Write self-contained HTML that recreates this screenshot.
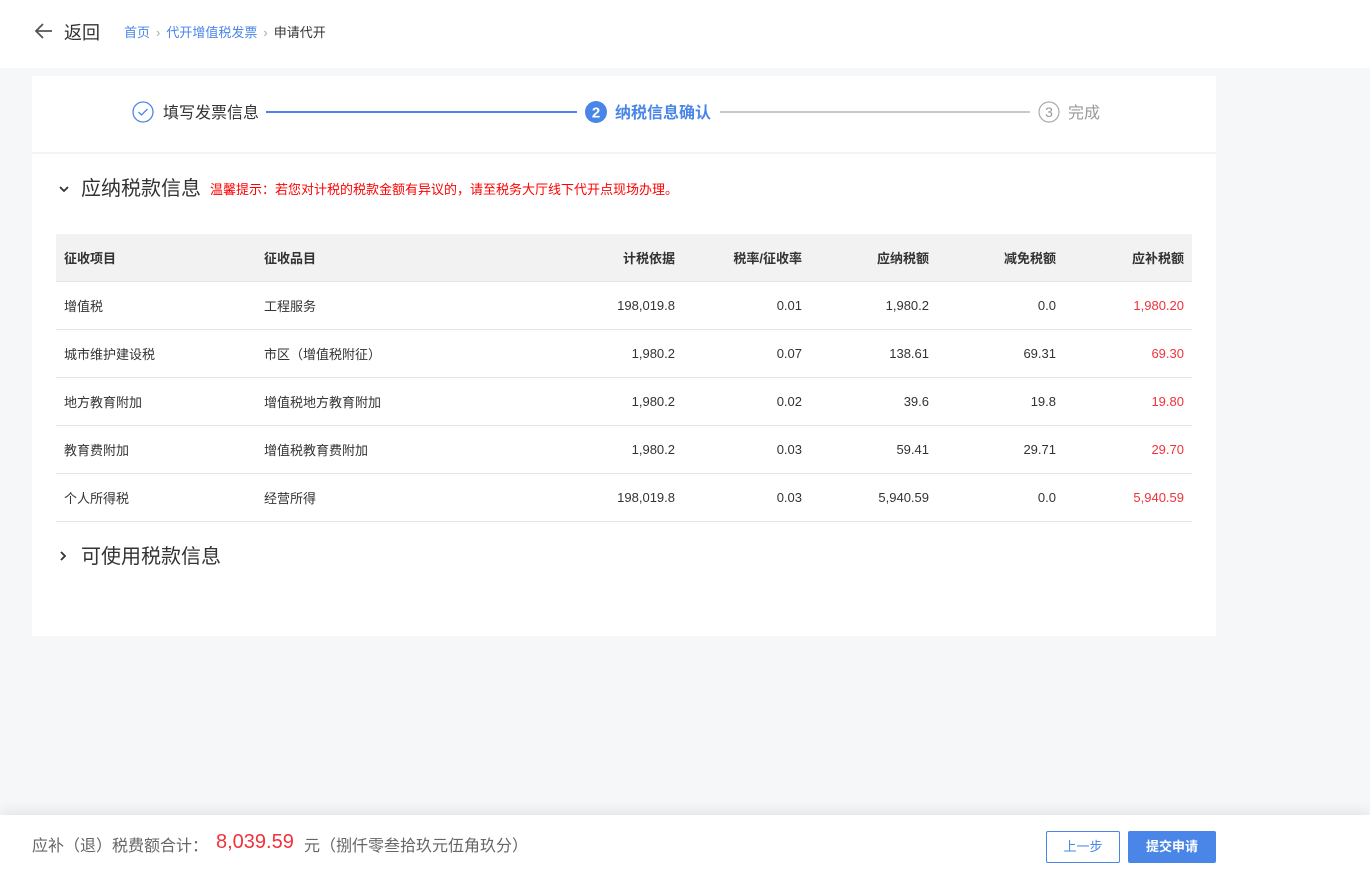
<!DOCTYPE html><html><head><meta charset="utf-8"><style>
*{margin:0;padding:0;box-sizing:border-box}
body{width:1370px;height:869px;background:#f6f7f9;font-family:"Liberation Sans","Noto Sans CJK SC",sans-serif;position:relative;overflow:hidden;color:#333}
.top{position:absolute;left:0;top:0;width:1370px;height:68px;background:#fff}
.a{position:absolute;white-space:nowrap}
.card{position:absolute;left:32px;top:76px;width:1184px;height:560px;background:#fff}
.sep{position:absolute;left:32px;top:152px;width:1184px;height:2px;background:#f3f4f6}
table{position:absolute;left:56px;top:234px;width:1136px;border-collapse:collapse;font-size:13px;color:#333}
th{height:47px;background:#f2f2f2;font-weight:bold;text-align:left;padding:0 8px;border-bottom:1px solid #e4e4e4}
td{height:48px;padding:0 8px;border-bottom:1px solid #e4e4e4}
.r{text-align:right}.red{color:#f0323c}
.foot{position:absolute;left:0;top:815px;width:1370px;height:54px;background:#fff;box-shadow:0 -6px 10px rgba(0,0,0,.06)}
.bs{color:#aaa;margin:0 6px}
</style></head><body>
<div class="top"></div>
<svg class="a" style="left:34px;top:22px" width="20" height="18" viewBox="0 0 20 18"><path d="M18 9H2M9 2L2 9l7 7" fill="none" stroke="#555" stroke-width="1.8"/></svg>
<div class="a" style="left:64px;top:19px;font-size:18px;color:#333">返回</div>
<div class="a" style="left:124px;top:22px;font-size:13px;color:#4a86e8">首页<span class="bs">›</span>代开增值税发票<span class="bs">›</span><span style="color:#333">申请代开</span></div>
<div class="card"></div><div class="sep"></div>
<svg class="a" style="left:132px;top:101px" width="22" height="22"><circle cx="11" cy="11" r="10" fill="none" stroke="#4a86e8" stroke-width="1.3"/><path d="M6.5 11l3 3 6-6" fill="none" stroke="#4a86e8" stroke-width="1.3"/></svg>
<div class="a" style="left:163px;top:99px;font-size:16px;color:#333">填写发票信息</div>
<div class="a" style="left:266px;top:111px;width:311px;height:2px;background:#4a86e8"></div>
<svg class="a" style="left:585px;top:101px" width="22" height="22"><circle cx="11" cy="11" r="11" fill="#4a86e8"/><text x="11" y="16.5" text-anchor="middle" font-size="15" font-weight="bold" fill="#fff" font-family="Liberation Sans">2</text></svg>
<div class="a" style="left:615px;top:99px;font-size:16px;font-weight:bold;color:#4a86e8">纳税信息确认</div>
<div class="a" style="left:720px;top:111px;width:310px;height:2px;background:#c8c8c8"></div>
<svg class="a" style="left:1038px;top:101px" width="22" height="22"><circle cx="11" cy="11" r="10" fill="none" stroke="#aaa" stroke-width="1.2"/><text x="11" y="16" text-anchor="middle" font-size="14" fill="#999" font-family="Liberation Sans">3</text></svg>
<div class="a" style="left:1068px;top:99px;font-size:16px;color:#999">完成</div>
<svg class="a" style="left:58px;top:184px" width="12" height="10"><path d="M2 3l4 4 4-4" fill="none" stroke="#333" stroke-width="1.8"/></svg>
<div class="a" style="left:81px;top:172px;font-size:20px;color:#333">应纳税款信息</div>
<div class="a" style="left:210px;top:179px;font-size:13px;color:#f00">温馨提示：若您对计税的税款金额有异议的，请至税务大厅线下代开点现场办理。</div>
<table>
<tr><th style="width:200px">征收项目</th><th style="width:240px">征收品目</th><th class="r" style="width:187px">计税依据</th><th class="r" style="width:127px">税率/征收率</th><th class="r" style="width:127px">应纳税额</th><th class="r" style="width:127px">减免税额</th><th class="r">应补税额</th></tr>
<tr><td>增值税</td><td>工程服务</td><td class="r">198,019.8</td><td class="r">0.01</td><td class="r">1,980.2</td><td class="r">0.0</td><td class="r red">1,980.20</td></tr>
<tr><td>城市维护建设税</td><td>市区（增值税附征）</td><td class="r">1,980.2</td><td class="r">0.07</td><td class="r">138.61</td><td class="r">69.31</td><td class="r red">69.30</td></tr>
<tr><td>地方教育附加</td><td>增值税地方教育附加</td><td class="r">1,980.2</td><td class="r">0.02</td><td class="r">39.6</td><td class="r">19.8</td><td class="r red">19.80</td></tr>
<tr><td>教育费附加</td><td>增值税教育费附加</td><td class="r">1,980.2</td><td class="r">0.03</td><td class="r">59.41</td><td class="r">29.71</td><td class="r red">29.70</td></tr>
<tr><td>个人所得税</td><td>经营所得</td><td class="r">198,019.8</td><td class="r">0.03</td><td class="r">5,940.59</td><td class="r">0.0</td><td class="r red">5,940.59</td></tr>
</table>
<svg class="a" style="left:58px;top:550px" width="10" height="12"><path d="M3 2l4 4-4 4" fill="none" stroke="#333" stroke-width="1.8"/></svg>
<div class="a" style="left:81px;top:540px;font-size:20px;color:#333">可使用税款信息</div>
<div class="foot"></div>
<div class="a" style="left:32px;top:832px;font-size:16px;color:#666">应补（退）税费额合计：</div>
<div class="a" style="left:216px;top:831px;font-size:20px;color:#f0323c">8,039.59</div>
<div class="a" style="left:304px;top:832px;font-size:16px;color:#666">元（捌仟零叁拾玖元伍角玖分）</div>
<div class="a" style="left:1046px;top:831px;width:74px;height:32px;border:1px solid #4a86e8;border-radius:2px;color:#4a86e8;font-size:13px;text-align:center;line-height:30px;background:#fff">上一步</div>
<div class="a" style="left:1128px;top:831px;width:88px;height:32px;background:#4a86e8;border-radius:2px;color:#fff;font-size:13px;font-weight:bold;text-align:center;line-height:32px">提交申请</div>
</body></html>
